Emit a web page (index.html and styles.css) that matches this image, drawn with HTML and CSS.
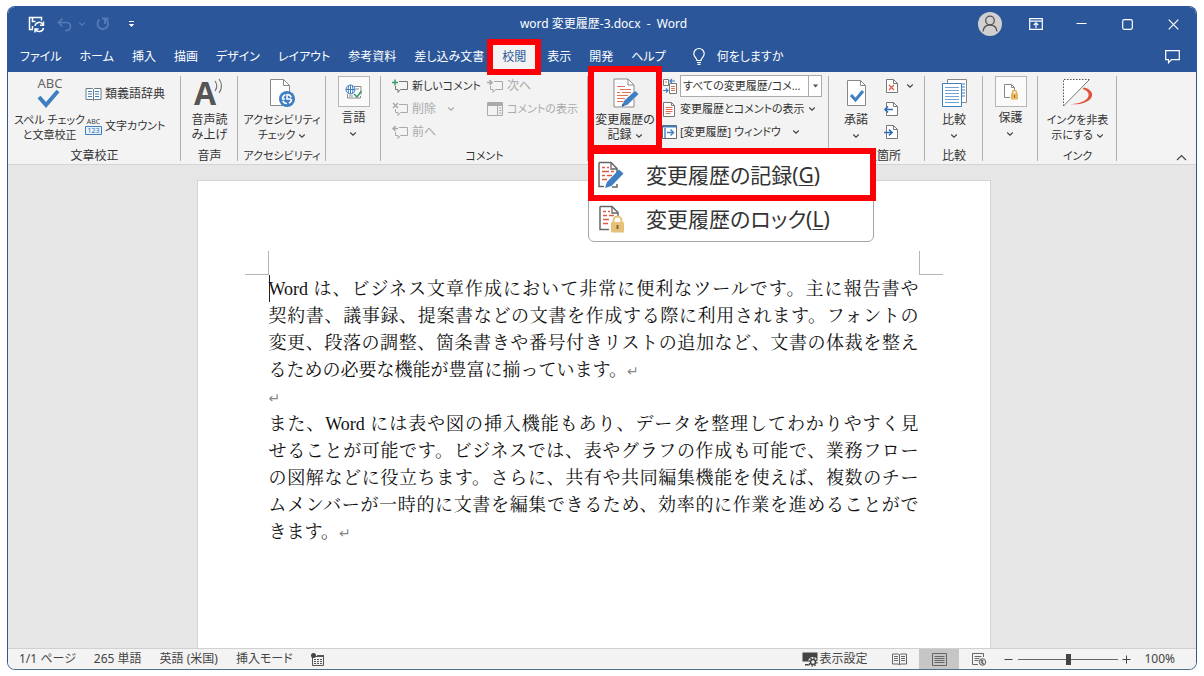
FILE: index.html
```html
<!DOCTYPE html>
<html lang="ja">
<head>
<meta charset="utf-8">
<meta name="viewport" content="width=device-width, initial-scale=1">
<title>word 変更履歴-3.docx - Word</title>
<link rel="stylesheet" href="styles.css">
</head>
<body>
<svg class="defs" aria-hidden="true">
  <symbol id="chev" viewBox="0 0 8 6"><path d="M1.2 1.5 4 4.2 6.8 1.5" fill="none" stroke="currentColor" stroke-width="1.1"/></symbol>
  <symbol id="balloon" viewBox="0 0 17 15"><path d="M7 2.500h8.500v8H8.500l-2.500 3v-3H3.500V7" fill="none" stroke="currentColor"/></symbol>
  <symbol id="page" viewBox="0 0 12 14"><path d="M.5.5h7l4 4v9H.5z" fill="#fff" stroke="#777"/><path d="M7.500.5v4h4" fill="none" stroke="#777"/></symbol>
  <symbol id="track" viewBox="0 0 26 30"><path d="M1 1h14l6 6v22H1z" fill="#fff" stroke="#8a8a8a"/><path d="M15 1v6h6" fill="none" stroke="#8a8a8a"/><path d="M4 8.500h8M7 11.500h11M4 14.500h3m2 0h9M4 17.500h11M4 20.500h8M4 23.500h7" stroke="#e0705a"/><path d="m8.500 29 2-6L22 12.500l4 3.500-11.500 11z" fill="#3f7fc1" stroke="#f3f3f3" stroke-width=".7"/><path d="m8.500 29 1-3.200 2.200 2z" fill="#2b5c94"/></symbol>
</svg>
<div class="window">
  <header class="titlebar">
    <div class="quick">
      <button class="icon-btn" aria-label="保存"><svg width="17" height="17" viewBox="0 0 17 17" fill="none" stroke="#fff" stroke-width="1.500"><path d="M5 13.500H1.500V1.500h12V4.500M4.500 1.500v4h3M4.500 13v-3"/><path d="M7 10a4.300 4.300 0 0 1 8-1.500M15.500 5.500V9.200h-3.600M15.500 12a4.300 4.300 0 0 1-8 1.300M7 16.500v-3.600h3.600"/></svg></button>
      <button class="icon-btn dim undo" aria-label="元に戻す"><svg width="15" height="15" viewBox="0 0 15 15" fill="none" stroke="currentColor" stroke-width="1.700"><path d="M5.500 1.500 1.500 5.500l4 4M2 5.500h7.500a4 4 0 0 1 0 8H8"/></svg><svg class="chev" width="8" height="6"><use href="#chev"/></svg></button>
      <button class="icon-btn dim redo" aria-label="やり直し"><svg width="14" height="14" viewBox="0 0 14 14" fill="none" stroke="currentColor" stroke-width="1.900"><path d="M3.500 2.500a5.300 5.300 0 1 0 6.500 0M6 1.500h6.500M9 2v5"/></svg></button>
      <button class="icon-btn more" aria-label="クイック アクセスのカスタマイズ"><svg width="7" height="7" viewBox="0 0 7 7"><path d="M1 .5h5" stroke="#fff"/><path d="M.8 3h5.400L3.500 6z" fill="#fff"/></svg></button>
    </div>
    <h1 class="doc-title">word 変更履歴-3.docx&nbsp; -&nbsp; Word</h1>
    <div class="sys">
      <button class="icon-btn" aria-label="アカウント"><svg width="24" height="24" viewBox="0 0 24 24"><circle cx="12" cy="12" r="12" fill="#d0d0d0"/><g fill="none" stroke="#555" stroke-width="1.300"><circle cx="12" cy="8.500" r="4.300"/><path d="M5 19.500c.5-4.500 3.200-6.500 7-6.500s6.500 2 7 6.500"/></g></svg></button>
      <button class="sys-btn" aria-label="リボンの表示オプション"><svg width="14" height="12" viewBox="0 0 14 12" fill="none" stroke="#fff" stroke-width="1.200"><path d="M.7.7h12.600v10.600H.7zM.7 3.200h12.600M7 10V5M4.700 7 7 4.800 9.300 7"/></svg></button>
      <button class="sys-btn" aria-label="最小化"><svg width="11" height="11" viewBox="0 0 11 11"><path d="M.5 4.500h10" stroke="#fff" stroke-width="1.200"/></svg></button>
      <button class="sys-btn" aria-label="最大化"><svg width="11" height="11" viewBox="0 0 11 11"><rect x=".7" y=".7" width="9.600" height="9.600" rx="1.500" fill="none" stroke="#fff" stroke-width="1.200"/></svg></button>
      <button class="sys-btn" aria-label="閉じる"><svg width="11" height="11" viewBox="0 0 11 11"><path d="m.7.7 9.600 9.600m0-9.600L.7 10.300" stroke="#fff" stroke-width="1.200"/></svg></button>
    </div>
  </header>

  <nav class="tabs">
    <button class="tab">ファイル</button>
    <button class="tab">ホーム</button>
    <button class="tab">挿入</button>
    <button class="tab">描画</button>
    <button class="tab">デザイン</button>
    <button class="tab">レイアウト</button>
    <button class="tab">参考資料</button>
    <button class="tab">差し込み文書</button>
    <button class="tab active marked">校閲</button>
    <button class="tab">表示</button>
    <button class="tab">開発</button>
    <button class="tab">ヘルプ</button>
    <button class="tab tell"><svg width="12" height="17" viewBox="0 0 12 17" fill="none" stroke="#fff" stroke-width="1.200"><path d="M4 12.500c0-2.500-3.200-3.500-3.200-6.800a5.200 5.200 0 0 1 10.400 0c0 3.300-3.200 4.300-3.200 6.800zM4 14.500h4M4.500 16.300h3"/></svg>何をしますか</button>
    <button class="icon-btn comments-btn" aria-label="コメント"><svg width="15" height="14" viewBox="0 0 15 14" fill="none" stroke="#fff" stroke-width="1.200"><path d="M.7.7h13.600v9H6.500l-3 3v-3H.7z"/></svg></button>
  </nav>

  <section class="ribbon" aria-label="校閲">
    <div class="group g-proof">
      <div class="group-body">
        <button class="big compact"><svg width="32" height="32" viewBox="0 0 32 32"><text x="16" y="11" text-anchor="middle" class="abc">ABC</text><path d="m5 20 7 8 12-14" fill="none" stroke="#3f7fc1" stroke-width="4"/></svg><span>スペル チェック<br>と文章校正</span></button>
        <div class="stack wide">
          <button class="small"><svg width="17" height="14" viewBox="0 0 17 14"><path d="M1 1.500h6.500l1 1 1-1H16v11H9.500l-1 1-1-1H1zM8.500 2.500v11" fill="#fff" stroke="#6b7a8a"/><path d="M3 4.500h4M3 7h4M3 9.500h4m3-5h4M10 7h4m-4 2.500h4" stroke="#3f7fc1"/></svg>類義語辞典</button>
          <button class="small compact"><svg width="17" height="17" viewBox="0 0 17 17"><text x="8.500" y="6" text-anchor="middle" class="tiny">ABC</text><path d="M.5 8.500h16v8H.5z" fill="#e9f2fb" stroke="#3f7fc1"/><text x="8.500" y="15" text-anchor="middle" class="tiny blue">123</text></svg>文字カウント</button>
        </div>
      </div>
      <h2>文章校正</h2>
    </div>
    <div class="group g-voice">
      <div class="group-body">
        <button class="big"><svg width="32" height="32" viewBox="0 0 32 32"><text x="12" y="28" text-anchor="middle" class="big-a">A</text><path d="M22 4q3.500 5 0 10M26 2q5 7 0 14" fill="none" stroke="#777" stroke-width="1.200"/></svg><span>音声読<br>み上げ</span></button>
      </div>
      <h2>音声</h2>
    </div>
    <div class="group g-access">
      <div class="group-body">
        <button class="big compact"><svg width="32" height="32" viewBox="0 0 32 32"><path d="M4.500 2.500h13l6 6v20h-19z" fill="#fff" stroke="#888"/><path d="M17.500 2.500v6h6" fill="none" stroke="#888"/><circle cx="21" cy="22" r="8" fill="#3f7fc1"/><circle cx="21" cy="22" r="4.500" fill="none" stroke="#fff" stroke-width="1.600" stroke-dasharray="5 2"/><path d="M21 17v5h4M16 22h3" fill="none" stroke="#fff" stroke-width="1.500"/></svg><span>アクセシビリティ<br>チェック <svg class="chev" width="8" height="6"><use href="#chev"/></svg></span></button>
      </div>
      <h2 class="compact">アクセシビリティ</h2>
    </div>
    <div class="group g-lang">
      <div class="group-body">
        <button class="big boxed"><span class="frame"><svg width="18" height="16" viewBox="0 0 18 16"><path d="M9 2.500h7v8M2.500 10v4h13V12" fill="#fff" stroke="#888"/><circle cx="5.500" cy="5.500" r="4.500" fill="#fff" stroke="#3f7fc1"/><path d="M1 5.500h9M5.500 1v9M3.500 2q-1 3.500 0 7m4-7q1 3.500 0 7" fill="none" stroke="#3f7fc1"/><path d="m9 10 3 3 4.500-6" fill="none" stroke="#3d9a6b" stroke-width="1.600"/><path d="M11 5h3M4 12h4" stroke="#888"/></svg></span><span>言語<br><svg class="chev" width="8" height="6"><use href="#chev"/></svg></span></button>
      </div>
    </div>
    <div class="group g-comment">
      <div class="group-body">
        <div class="stack">
          <button class="small compact new"><svg width="17" height="15"><use href="#balloon"/><path d="M3 .5v6M0 3.500h6" stroke="#3d9a6b" stroke-width="1.500"/></svg>新しいコメント</button>
          <button class="small" disabled><svg width="17" height="15"><use href="#balloon"/><path d="m1 1 5 5m0-5L1 6" stroke="currentColor" stroke-width="1.500"/></svg>削除<svg class="chev far" width="8" height="6"><use href="#chev"/></svg></button>
          <button class="small" disabled><svg width="17" height="15"><use href="#balloon"/><path d="M6 3.500H1M3.500 1 1 3.500 3.500 6" fill="none" stroke="currentColor" stroke-width="1.500"/></svg>前へ</button>
        </div>
        <div class="stack">
          <button class="small" disabled><svg width="17" height="15"><use href="#balloon"/><path d="M0 3.500h5M2.500 1 5 3.500 2.500 6" fill="none" stroke="currentColor" stroke-width="1.500"/></svg>次へ</button>
          <button class="small compact" disabled><svg width="17" height="15" viewBox="0 0 17 15" fill="none" stroke="currentColor"><path d="M.5.5h15v13H.5zM.5 3.500h15M10.500 3.500v10M12 6h2.500M12 8.500h2.500M12 11h2.500"/><path d="M1 2h14" stroke-width="2"/></svg>コメントの表示</button>
        </div>
      </div>
      <h2 class="compact">コメント</h2>
    </div>
    <div class="group g-track">
      <div class="group-body">
        <button class="big record marked" aria-haspopup="menu" aria-expanded="true"><svg width="32" height="32" viewBox="-4 -1 32 32"><use href="#track" width="26" height="30"/></svg><span>変更履歴の<br>記録 <svg class="chev" width="8" height="6"><use href="#chev"/></svg></span></button>
        <div class="stack markup">
          <div class="small compact"><svg width="15" height="16" viewBox="0 0 15 16"><path d="M1.500 1.500h5v6h-5zM7.500 5.500h7v10h-7z" fill="#fff" stroke="#777"/><path d="M3 4h2M9 8.500h4M9 10.500h4M9 12.500h4" stroke="#e0705a"/><path d="M8 3h5M10 1 8 3l2 2M1 12.500h5M4 10.500l2 2-2 2" fill="none" stroke="#3f7fc1" stroke-width="1.200"/></svg><span class="combo"><select aria-label="変更内容の表示"><option>すべての変更履歴/コメ…</option></select><svg width="7" height="4" viewBox="0 0 7 4"><path d="M.8.5h5.400L3.500 3.500z" fill="#555"/></svg></span></div>
          <button class="small compact"><svg width="15" height="15" viewBox="0 0 15 15"><path d="M1.500.5h8l3 3v11h-11z" fill="#fff" stroke="#777"/><path d="M9.500.5v3h3" fill="none" stroke="#777"/><path d="M3.500 5.500h7m-7 2h7m-7 2h7m-7 2h5" stroke="#e0705a"/></svg>変更履歴とコメントの表示<svg class="chev" width="8" height="6"><use href="#chev"/></svg></button>
          <button class="small compact"><svg width="15" height="14" viewBox="0 0 15 14"><path d="M.5.5h14v13H.5z" fill="#fff" stroke="#666"/><path d="M1 1.500h13" stroke="#3f7fc1" stroke-width="2"/><path d="M5 7.500h6M8.500 4.500l3 3-3 3M3 3v10" fill="none" stroke="#3f7fc1" stroke-width="1.400"/></svg>[変更履歴] ウィンドウ<svg class="chev far" width="8" height="6"><use href="#chev"/></svg></button>
        </div>
      </div>
      <div class="menu" role="menu">
        <button class="menu-item marked" role="menuitem"><svg width="28" height="30" viewBox="0 0 28 30"><path d="M2 2.500h12l6 6V13M2 2.500v24h5M20 24v3h-5" fill="none" stroke="#666" stroke-width="1.500" /><path d="M14 3v6h6" fill="none" stroke="#666" stroke-width="1.300"/><path d="M5 7.500h3m2 0h2M5 11.500h7m2 0h3M5 15.500h3m2 0h5M5 19.500h5" stroke="#df5a42" stroke-width="1.500"/><path d="m8 28 2-6L22 9.500l4.500 4L14.500 26z" fill="#3f7fc1"/></svg>変更履歴の記録(<u>G</u>)</button>
        <button class="menu-item" role="menuitem"><svg width="28" height="30" viewBox="0 0 28 30"><path d="M3 2.500h12l6 6V12M3 2.500v23h9" fill="none" stroke="#666" stroke-width="1.500"/><path d="M15 3v6h6" fill="none" stroke="#666" stroke-width="1.300"/><path d="M6 7.500h3m2 0h2M6 11.500h4m2 0h5M6 15.500h6M6 19.500h5" stroke="#df5a42" stroke-width="1.500"/><path d="M16.500 19v-2.500a4 4 0 0 1 8 0V19" fill="none" stroke="#e8c078" stroke-width="2"/><rect x="14" y="18" width="13" height="10.500" rx="1" fill="#e8c078"/><path d="M20.500 21v4" stroke="#7d683c" stroke-width="2"/></svg>変更履歴のロック(<u>L</u>)</button>
      </div>
    </div>
    <div class="group g-change">
      <div class="group-body">
        <button class="big"><svg width="32" height="32" viewBox="0 0 32 32"><path d="M7.500 3.500h13l5 5v20h-18z" fill="#fff" stroke="#888"/><path d="M20.500 3.500v5h5" fill="none" stroke="#888"/><path d="m11 18 4.500 5L23 14" fill="none" stroke="#3f7fc1" stroke-width="3"/></svg><span>承諾<br><svg class="chev" width="8" height="6"><use href="#chev"/></svg></span></button>
        <div class="stack">
          <button class="small" aria-label="元に戻す"><svg width="14" height="16" viewBox="-2 -1 14 16"><use href="#page" width="12" height="14"/><path d="m3 6 5 5m0-5-5 5" stroke="#df5a42" stroke-width="1.300"/></svg><svg class="chev" width="8" height="6"><use href="#chev"/></svg></button>
          <button class="small" aria-label="前の変更箇所"><svg width="14" height="16" viewBox="-2 -1 14 16"><use href="#page" width="12" height="14"/><path d="M-1 7.500h8M2 4.500l-3 3 3 3" fill="none" stroke="#2f6eb5" stroke-width="1.700"/></svg></button>
          <button class="small" aria-label="次の変更箇所"><svg width="14" height="16" viewBox="-2 -1 14 16"><use href="#page" width="12" height="14"/><path d="M-2 7.500h8M3 4.500l3 3-3 3" fill="none" stroke="#2f6eb5" stroke-width="1.700"/></svg></button>
        </div>
      </div>
      <h2>変更箇所</h2>
    </div>
    <div class="group g-compare">
      <div class="group-body">
        <button class="big"><svg width="32" height="32" viewBox="0 0 32 32"><path d="M9.500 2.500h19v23h-19z" fill="#fff" stroke="#888"/><path d="M24 7h3m-3 3h3m-3 3h3m-3 3h3m-3 3h3" stroke="#3f7fc1"/><path d="M4.500 6.500h19v23h-19z" fill="#fff" stroke="#3f7fc1"/><path d="M7 10.500h14M7 13.500h14M7 16.500h14M7 19.500h14M7 22.500h14M7 25.500h14" stroke="#6ea3d6"/></svg><span>比較<br><svg class="chev" width="8" height="6"><use href="#chev"/></svg></span></button>
      </div>
      <h2>比較</h2>
    </div>
    <div class="group g-lang">
      <div class="group-body">
        <button class="big boxed"><span class="frame"><svg width="16" height="18" viewBox="0 0 16 18"><path d="M7 14.500H1.500v-13h7l3 3V7" fill="#fff" stroke="#888"/><path d="M8.500 1.500v3h3" fill="none" stroke="#888"/><path d="M9.500 11V9.500a2 2 0 0 1 4 0V11" fill="none" stroke="#e3ae55" stroke-width="1.500"/><path d="M8 10.500h7v6H8z" fill="#e8b55e"/><path d="M11.500 12v2.500" stroke="#7d683c"/></svg></span><span>保護<br><svg class="chev" width="8" height="6"><use href="#chev"/></svg></span></button>
      </div>
    </div>
    <div class="group g-ink">
      <div class="group-body">
        <button class="big compact"><svg width="32" height="32" viewBox="0 0 32 32"><path d="M1.500 29V2.500H27" fill="none" stroke="#555" stroke-dasharray="1.500 1.500"/><path d="M2 28.500V3h24.500z" fill="#fff"/><path d="m1.500 29 26-26.500" stroke="#777"/><path d="M22 10.500c5 1 9 4.500 8 8.500-1.500 6-12 9.500-22 8 8 0 17-2.500 18.500-8 .8-3-1.500-5.500-6-7z" fill="#e0523a"/></svg><span>インクを非表<br>示にする <svg class="chev" width="8" height="6"><use href="#chev"/></svg></span></button>
      </div>
      <h2 class="compact">インク</h2>
    </div>
    <button class="icon-btn collapse" aria-label="リボンを折りたたむ"><svg width="11" height="7" viewBox="0 0 11 7"><path d="m1 6 4.500-4.500L10 6" fill="none" stroke="#444" stroke-width="1.200"/></svg></button>
  </section>

  <main class="desk">
    <article class="page">
      <div class="corners"><i></i><i></i></div>
      <div class="text">
        <div class="caret"></div>
        <p><span>Word は、ビジネス文章作成において非常に便利なツールです。主に報告書や</span><span>契約書、議事録、提案書などの文書を作成する際に利用されます。フォントの</span><span>変更、段落の調整、箇条書きや番号付きリストの追加など、文書の体裁を整え</span><span>るための必要な機能が豊富に揃っています。<b>↵</b></span></p>
        <p><span><b>↵</b></span></p>
        <p><span>また、Word には表や図の挿入機能もあり、データを整理してわかりやすく見</span><span>せることが可能です。ビジネスでは、表やグラフの作成も可能で、業務フロー</span><span>の図解などに役立ちます。さらに、共有や共同編集機能を使えば、複数のチー</span><span>ムメンバーが一時的に文書を編集できるため、効率的に作業を進めることがで</span><span>きます。<b>↵</b></span></p>
      </div>
    </article>
  </main>

  <footer class="status">
    <button class="st">1/1 ページ</button>
    <button class="st">265 単語</button>
    <button class="st">英語 (米国)</button>
    <button class="st">挿入モード</button>
    <button class="st" aria-label="マクロの記録"><svg width="13" height="13" viewBox="0 0 13 13"><path d="M1.500 3.500h11v9h-11z" fill="none" stroke="#555"/><path d="M6 3h7" stroke="#555" stroke-width="2"/><path d="M3 6.500h8M3 8.500h8M3 10.500h8" stroke="#555" stroke-dasharray="2 1"/><circle cx="2.500" cy="2.500" r="2.500" fill="#444"/></svg></button>
    <button class="st display"><svg width="16" height="16" viewBox="0 0 16 16"><path d="M.5 1.500h15v9H.5zM3 13h5v1.500H3z" fill="#444"/><circle cx="11" cy="11" r="5" fill="#f3f3f3"/><circle cx="11" cy="11" r="2.500" fill="none" stroke="#444" stroke-width="1.500"/><circle cx="11" cy="11" r="4" fill="none" stroke="#444" stroke-width="1.300" stroke-dasharray="1.600 1.500"/></svg>表示設定</button>
    <button class="view" aria-label="閲覧モード"><svg width="15" height="12" viewBox="0 0 15 12" fill="none" stroke="#666"><path d="M.5 1h6l1 1 1-1h6v10h-6l-1 1-1-1h-6zM7.500 2v10M2 3.500h4M2 5.500h4M2 7.500h4M9 3.500h4M9 5.500h4M9 7.500h4"/></svg></button>
    <button class="view on" aria-label="印刷レイアウト"><svg width="15" height="13" viewBox="0 0 15 13" fill="none" stroke="#666"><path d="M.5.5h14v12H.5zM2.500 3.500h10M2.500 5.500h10M2.500 7.500h10M2.500 9.500h10"/></svg></button>
    <button class="view" aria-label="Web レイアウト"><svg width="15" height="13" viewBox="0 0 15 13" fill="none" stroke="#666"><path d="M6 11.500H.5V.5h11V4M2.500 3.500h7M2.500 5.500h5M2.500 7.500h4"/><circle cx="10.500" cy="9" r="3.300" fill="#ddd"/><path d="M8.500 7.500c2-1 2.500.5 1.500 1.500s1.500 1 1.500 2.500" stroke-width="1.400"/></svg></button>
    <button class="zoom-btn" aria-label="縮小"><svg width="9" height="9" viewBox="0 0 9 9"><path d="M.5 4.500h8" stroke="#444"/></svg></button>
    <input class="zoom" type="range" min="0" max="100" value="50" aria-label="ズーム">
    <button class="zoom-btn" aria-label="拡大"><svg width="9" height="9" viewBox="0 0 9 9"><path d="M.5 4.500h8M4.500.5v8" stroke="#444"/></svg></button>
    <button class="st percent">100%</button>
  </footer>
</div>
</body>
</html>
```
FILE: styles.css
```css
* { box-sizing: border-box; }

body {
  margin: 0;
  padding: 6px 7px;
  background: #fff;
  color: #333;
  font: 12px/16px "Noto Sans", "Noto Sans CJK JP", sans-serif;
  font-feature-settings: "palt";
}

button, select {
  margin: 0;
  padding: 0;
  border: 0;
  background: none;
  color: inherit;
  font: inherit;
  font-feature-settings: inherit;
  white-space: nowrap;
}

svg { flex: none; overflow: visible; }
.defs { display: none; }
.chev { color: #444; vertical-align: middle; }

.window {
  display: flex;
  flex-direction: column;
  min-height: calc(100vh - 12px);
  border: 1px solid #2b579a;
  border-bottom-color: #4a718f;
  border-radius: 8px;
  overflow: hidden;
}

.icon-btn { display: flex; align-items: center; }
.marked { position: relative; z-index: 3; outline: 6px solid #fb0007; }

/* Title bar */
.titlebar {
  display: grid;
  grid-template-columns: 1fr auto 1fr;
  align-items: center;
  height: 34px;
  padding: 0 17px 0 20px;
  background: #2b579a;
  color: #fff;
}
.quick { display: flex; align-items: center; }
.undo { margin-left: 12px; gap: 6px; }
.redo { margin-left: 10px; }
.more { margin-left: 18px; }
.dim, .dim .chev { color: #527bb6; }
.doc-title { margin: 0; font-size: 12px; font-weight: 400; }
.sys { display: flex; align-items: center; justify-content: flex-end; }
.sys-btn { display: flex; justify-content: flex-end; width: 46px; }
.sys-btn:nth-child(2) { width: 41px; }
.sys-btn:nth-child(3) { width: 44px; }

/* Tabs */
.tabs {
  display: flex;
  align-items: center;
  height: 31px;
  padding: 0 16px 0 3px;
  background: #2b579a;
  color: #fff;
}
.tab { height: 24px; padding: 0 9px; }
.tab.active { margin-right: 3px; background: #f3f3f3; color: #2b579a; }
.tell { display: flex; align-items: center; gap: 12px; margin-left: 9px; }
.comments-btn { margin-left: auto; }

/* Ribbon */
.ribbon {
  display: flex;
  position: relative;
  z-index: 2;
  height: 93px;
  border-bottom: 1px solid #d4d4d4;
  background: #f3f3f3;
}
.group {
  display: flex;
  flex-direction: column;
  flex: none;
  position: relative;
}
.group::after {
  content: "";
  position: absolute;
  top: 4px;
  right: 0;
  bottom: 3px;
  width: 1px;
  background: #b0b0b0;
}
.group-body { display: flex; justify-content: center; height: 77px; }
.group h2 {
  margin: 0;
  font-size: 12px;
  font-weight: 400;
  line-height: 16px;
  text-align: center;
}
.g-proof { width: 173px; }
.g-voice { width: 57px; }
.g-access { width: 88px; }
.g-lang { width: 55px; }
.g-comment { width: 207px; }
.g-track { width: 241px; }
.g-change { width: 96px; }
.g-compare { width: 58px; }
.g-ink { width: 79px; }

.big {
  display: flex;
  flex-direction: column;
  align-items: center;
  gap: 3px;
  padding-top: 5px;
  line-height: 15px;
}
.compact, .group h2.compact { font-size: 11px; }
.boxed { padding-top: 4px; }
.frame {
  display: flex;
  align-items: center;
  justify-content: center;
  width: 32px;
  height: 31px;
  border: 1px solid #b5b5b5;
  background: #fafafa;
}
.record {
  width: 62px;
  height: 73px;
  background: #f0f0f0;
}
.stack { display: flex; flex-direction: column; gap: 7px; padding-top: 6px; }
.stack.wide { gap: 16px; padding-top: 14px; }
.small { display: flex; align-items: center; gap: 3px; height: 16px; }
.small:disabled, .small:disabled .chev { color: #aaa; }
.chev.far { margin-left: 8px; }
.g-proof .group-body { justify-content: flex-start; padding-left: 6px; }
.g-comment .group-body { justify-content: flex-start; gap: 6px; padding-left: 11px; }
.g-comment .new { color: #333; }
.g-comment .new use { color: #777; }
.g-track .group-body { justify-content: flex-start; gap: 6px; padding-left: 6px; }
.g-change .group-body { gap: 12px; }
.g-change .small { gap: 8px; }

.combo { display: flex; align-items: center; position: relative; height: 22px; }
.combo select {
  width: 142px;
  height: 22px;
  padding-left: 2px;
  border: 1px solid #ababab;
  border-radius: 0;
  background: linear-gradient(#ababab, #ababab) right 12px top / 1px 100% no-repeat #fff;
  appearance: none;
}
.combo svg { position: absolute; right: 3px; }
.collapse { margin: auto 9px 3px auto; }

.abc { font: 13px "Noto Sans", sans-serif; fill: #666; }
.tiny { font: 7px "Noto Sans", sans-serif; fill: #444; }
.tiny.blue { fill: #2f6eb5; }
.big-a { font: bold 32px "Open Sans", sans-serif; fill: #555; }

/* Drop-down menu */
.menu {
  display: flex;
  flex-direction: column;
  gap: 3px;
  position: absolute;
  z-index: 4;
  top: 78px;
  left: 0;
  width: 286px;
  padding: 3px 3px 2px 5px;
  border: 1px solid #a6a6a6;
  border-radius: 6px;
  background: #fff;
}
.menu-item {
  display: flex;
  align-items: center;
  height: 41px;
  padding-left: 3px;
  background: #fff;
  color: #333;
  font-size: 21px;
  line-height: 30px;
}
.menu-item svg { margin-right: 21px; }
.menu-item u { text-underline-offset: 2px; text-decoration-thickness: 1px; }

/* Document */
.desk {
  display: flex;
  flex: 1;
  justify-content: center;
  padding: 15px 17px 0 0;
  background: #e6e6e6;
}
.page {
  width: 794px;
  padding: 70px 71px 0;
  border: 1px solid #d4d4d4;
  border-bottom: 0;
  background: #fff;
}
.corners { display: flex; justify-content: space-between; margin: 0 -24px; }
.corners i { width: 24px; height: 24px; border: 0 solid #b5b5b5; border-bottom-width: 1px; }
.corners i:first-child { border-right-width: 1px; }
.corners i:last-child { border-left-width: 1px; }
.text {
  position: relative;
  padding-top: 1px;
  color: #111;
  font: 18px/27px "Liberation Serif", "Noto Serif CJK JP", "Noto Sans CJK JP", serif;
  font-feature-settings: normal;
}
.text p { margin: 0; }
.text span { display: block; white-space: nowrap; text-align: justify; text-align-last: justify; }
.text span:last-child { text-align-last: left; }
.text b { color: #888; font: 14px "DejaVu Sans", sans-serif; }
.caret { position: absolute; top: 0; left: 0; width: 1px; height: 27px; background: #222; }

/* Status bar */
.status {
  display: flex;
  align-items: center;
  height: 21px;
  padding: 0 21px 0 11px;
  border-top: 1px solid #d0d0d0;
  background: #f3f3f3;
  color: #444;
}
.st { display: flex; align-items: center; gap: 1px; margin-right: 18px; }
.display { margin-left: auto; margin-right: 12px; }
.view { display: flex; align-items: center; justify-content: center; width: 40px; height: 20px; }
.view.on { background: #c6c6c6; }
.zoom-btn { display: flex; }
.view + .zoom-btn { margin-left: 5px; }
.zoom {
  width: 100px;
  height: 12px;
  margin: 0 4px 0 5px;
  appearance: none;
  background: linear-gradient(#666, #666) center / 100% 1px no-repeat;
}
.zoom::-webkit-slider-thumb { appearance: none; width: 5px; height: 11px; background: #444; }
.percent { margin: 0 0 0 13px; }
```
